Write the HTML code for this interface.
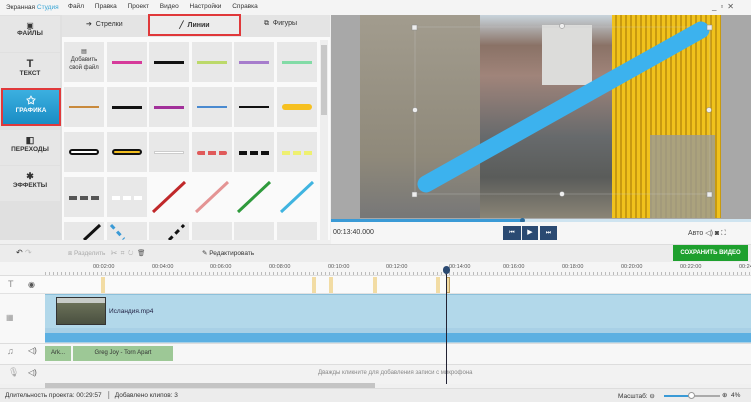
<!DOCTYPE html>
<html><head><meta charset="utf-8"><style>
*{box-sizing:border-box;margin:0;padding:0}
body{width:751px;height:402px;overflow:hidden;background:#f0f0f0;font-family:"Liberation Sans",sans-serif;font-size:7px;color:#333;position:relative}
.a{position:absolute}
.cell{position:absolute;width:40px;height:40px;background:#e8e8e8}
.ln{position:absolute;left:5px;width:30px;top:19px;height:3px}
.sb{position:absolute;left:0;width:60px;background:#e6e6e6;text-align:center;font-size:6.5px;font-weight:bold;color:#333}
.sb .ic{font-size:11px;font-weight:bold;display:block;margin-top:5px}
.tick{position:absolute;top:4px;font-size:5.5px;color:#555}
.clip{position:absolute;top:277px;width:4px;height:16px;background:#f2dca4}
</style></head><body>
<div class="a" style="left:0;top:0;width:751px;height:15px;background:#f4f4f4"></div>
<div class="a" style="left:6px;top:4px;font-size:6.5px">Экранная <span style="color:#3aa6d6">Студия</span></div>
<div class="a" style="left:68px;top:3px;font-size:6.5px;word-spacing:9px">Файл Правка Проект Видео Настройки Справка</div>
<div class="a" style="left:712px;top:2px;font-size:8px;color:#555;letter-spacing:4px">_▫✕</div>
<div class="a" style="left:0;top:15px;width:62px;height:225px;background:#e0e0e0"></div>
<div class="sb" style="top:16px;height:36px"><span class="ic" style="font-size:8px;font-weight:normal">▣</span>ФАЙЛЫ</div>
<div class="sb" style="top:53px;height:35px"><span class="ic">T</span>ТЕКСТ</div>
<div class="a" style="left:1px;top:88px;width:60px;height:38px;border:2px solid #e0383a;background:linear-gradient(#3cb0e0,#1a8cc4);color:#fff;text-align:center;font-size:6.5px;font-weight:bold"><span style="display:block;font-size:11px;margin-top:4px">✩</span>ГРАФИКА</div>
<div class="sb" style="top:130px;height:35px"><span class="ic" style="font-size:9px">◧</span>ПЕРЕХОДЫ</div>
<div class="sb" style="top:166px;height:35px"><span class="ic" style="font-size:9px">✱</span>ЭФФЕКТЫ</div>
<div class="a" style="left:62px;top:15px;width:268px;height:22px;background:#e4e4e4"></div>
<div class="a" style="left:86px;top:20px;font-size:7px">➔ &nbsp;Стрелки</div>
<div class="a" style="left:148px;top:14px;width:93px;height:22px;border:2px solid #e0383a;background:#ececec;text-align:center;font-size:7px;padding-top:5px;font-weight:bold">╱ &nbsp;Линии</div>
<div class="a" style="left:264px;top:20px;font-size:7px">⧉ &nbsp;Фигуры</div>
<div class="a" style="left:62px;top:37px;width:268px;height:203px;background:#fafafa"></div>
<div class="a" style="left:320px;top:40px;width:8px;height:200px;background:#eee"></div>
<div class="a" style="left:321px;top:45px;width:6px;height:70px;background:#c8c8c8"></div>
<div class="cell" style="left:64px;top:42px;text-align:center;font-size:6px;padding-top:6px;line-height:8px">▤<br>Добавить<br>свой файл</div>
<div class="cell" style="left:107px;top:42px"><div class="ln" style="background:#d63a9a"></div></div>
<div class="cell" style="left:149px;top:42px"><div class="ln" style="background:#111"></div></div>
<div class="cell" style="left:192px;top:42px"><div class="ln" style="background:#bcd96a"></div></div>
<div class="cell" style="left:234px;top:42px"><div class="ln" style="background:#a67ccc"></div></div>
<div class="cell" style="left:277px;top:42px"><div class="ln" style="background:#82dba6"></div></div>
<div class="cell" style="left:64px;top:87px"><div class="ln" style="background:#c98a3c;height:2px"></div></div>
<div class="cell" style="left:107px;top:87px"><div class="ln" style="background:#111"></div></div>
<div class="cell" style="left:149px;top:87px"><div class="ln" style="background:#a2309a"></div></div>
<div class="cell" style="left:192px;top:87px"><div class="ln" style="background:#4a8ad0;height:2px"></div></div>
<div class="cell" style="left:234px;top:87px"><div class="ln" style="background:#111;height:2px"></div></div>
<div class="cell" style="left:277px;top:87px"><div class="ln" style="background:#f6c020;height:6px;top:17px;border-radius:3px"></div></div>
<div class="cell" style="left:64px;top:132px"><div class="ln" style="background:#fff;border:2px solid #111;height:6px;top:17px;border-radius:3px"></div></div>
<div class="cell" style="left:107px;top:132px"><div class="ln" style="background:#f2be20;border:2px solid #111;height:6px;top:17px;border-radius:3px"></div></div>
<div class="cell" style="left:149px;top:132px"><div class="ln" style="background:#fff;border:1px solid #ccc;height:3px"></div></div>
<div class="cell" style="left:192px;top:132px"><div class="ln" style="background:repeating-linear-gradient(90deg,#e05a5a 0 8px,transparent 8px 11px);height:4px;border-radius:2px"></div></div>
<div class="cell" style="left:234px;top:132px"><div class="ln" style="background:repeating-linear-gradient(90deg,#111 0 8px,transparent 8px 11px);height:4px"></div></div>
<div class="cell" style="left:277px;top:132px"><div class="ln" style="background:repeating-linear-gradient(90deg,#eef070 0 8px,transparent 8px 11px);height:4px"></div></div>
<div class="cell" style="left:64px;top:177px"><div class="ln" style="background:repeating-linear-gradient(90deg,#555 0 8px,transparent 8px 11px);height:4px"></div></div>
<div class="cell" style="left:107px;top:177px"><div class="ln" style="background:repeating-linear-gradient(90deg,#fff 0 8px,transparent 8px 11px);height:4px"></div></div>
<svg class="a" style="left:149px;top:177px" width="170" height="63">
<line x1="4" y1="35" x2="36" y2="5" stroke="#c0282a" stroke-width="3"/>
<line x1="47" y1="35" x2="79" y2="5" stroke="#e49494" stroke-width="3"/>
<line x1="89" y1="35" x2="121" y2="5" stroke="#2e9a3c" stroke-width="3"/>
<line x1="132" y1="35" x2="164" y2="5" stroke="#40b4e0" stroke-width="3"/>
</svg>
<div class="cell" style="left:64px;top:222px;height:18px"></div>
<div class="cell" style="left:107px;top:222px;height:18px"></div>
<div class="cell" style="left:149px;top:222px;height:18px"></div>
<div class="cell" style="left:192px;top:222px;height:18px"></div>
<div class="cell" style="left:234px;top:222px;height:18px"></div>
<div class="cell" style="left:277px;top:222px;height:18px"></div>
<svg class="a" style="left:64px;top:222px" width="130" height="18">
<line x1="20" y1="18" x2="36" y2="3" stroke="#111" stroke-width="3"/>
<line x1="47" y1="3" x2="60" y2="17" stroke="#3a9ad6" stroke-width="3" stroke-dasharray="5 4"/>
<line x1="105" y1="18" x2="120" y2="3" stroke="#111" stroke-width="3" stroke-dasharray="5 4"/>
</svg>
<div class="a" style="left:331px;top:15px;width:420px;height:204px;background:#a8a8a8"></div>
<div class="a" style="left:360px;top:15px;width:120px;height:203px;background:linear-gradient(#a29c8e,#8f897a 70%,#777 100%)"></div>
<div class="a" style="left:480px;top:15px;width:135px;height:203px;background:linear-gradient(#c8d4dc 0%,#8a7266 15%,#a0847a 30%,#676a6c 60%,#5a5c5a 80%,#8a8476 100%)"></div>
<div class="a" style="left:542px;top:25px;width:50px;height:60px;background:#dcdcda"></div>
<div class="a" style="left:612px;top:15px;width:109px;height:203px;background:repeating-linear-gradient(90deg,#f0c21c 0 3px,#c89a10 3px 5px)"></div>
<div class="a" style="left:650px;top:135px;width:65px;height:83px;background:#9a9a96;opacity:.8"></div>
<svg class="a" style="left:331px;top:15px" width="420" height="205">
<rect x="84" y="12" width="295" height="167" fill="none" stroke="#ccc" stroke-width=".5" opacity=".6"/>
<line x1="95" y1="169" x2="370" y2="15" stroke="#3cb2ee" stroke-width="17" stroke-linecap="round"/>
<g fill="#eee" stroke="#888" stroke-width=".5"><rect x="81" y="10" width="5" height="5"/><rect x="376" y="10" width="5" height="5"/><rect x="81" y="177" width="5" height="5"/><rect x="376" y="177" width="5" height="5"/>
<circle cx="231" cy="11" r="2.5"/><circle cx="231" cy="179" r="2.5"/><circle cx="84" cy="95" r="2.5"/><circle cx="378" cy="95" r="2.5"/></g>
</svg>
<div class="a" style="left:331px;top:219px;width:420px;height:3px;background:#cfe4f0"></div>
<div class="a" style="left:331px;top:219px;width:192px;height:3px;background:#3a9ad6"></div>
<div class="a" style="left:520px;top:218px;width:5px;height:5px;border-radius:3px;background:#2a6a9a"></div>
<div class="a" style="left:331px;top:222px;width:420px;height:22px;background:#f6f6f6"></div>
<div class="a" style="left:333px;top:229px;font-size:7px">00:13:40.000</div>
<div class="a" style="left:503px;top:226px;width:18px;height:14px;background:#2b4a72;color:#fff;font-size:6px;text-align:center;line-height:14px">⏮</div>
<div class="a" style="left:522px;top:226px;width:16px;height:14px;background:#2b4a72;color:#fff;font-size:7px;text-align:center;line-height:14px">▶</div>
<div class="a" style="left:540px;top:226px;width:17px;height:14px;background:#2b4a72;color:#fff;font-size:6px;text-align:center;line-height:14px">⏭</div>
<div class="a" style="left:688px;top:229px;font-size:7px;color:#444">Авто ◁) ◙ ⛶</div>
<div class="a" style="left:0;top:244px;width:751px;height:18px;background:#ececec;border-top:1px solid #ddd"></div>
<div class="a" style="left:16px;top:248px;font-size:8px;color:#333">↶ <span style="color:#bbb">↷</span></div>
<div class="a" style="left:68px;top:249px;font-size:6.5px;color:#aaa">⧈ Разделить &nbsp; ✂ &nbsp;⌗ &nbsp;↻ &nbsp;<span style="color:#555">🗑</span></div>
<div class="a" style="left:202px;top:249px;font-size:6.5px;color:#333">✎ Редактировать</div>
<div class="a" style="left:673px;top:245px;width:75px;height:16px;background:#1ea02e;color:#fff;font-size:6px;font-weight:bold;text-align:center;line-height:16px">СОХРАНИТЬ ВИДЕО</div>
<div class="a" style="left:0;top:262px;width:751px;height:14px;background:#f5f5f5;border-bottom:1px solid #ddd"></div>
<div class="a" style="left:45px;top:272px;width:706px;height:3px;background:repeating-linear-gradient(90deg,#bbb 0 1px,transparent 1px 4px)"></div>
<div class="tick" style="left:93px;top:264px">00:02:00</div><div class="tick" style="left:152px;top:264px">00:04:00</div><div class="tick" style="left:210px;top:264px">00:06:00</div><div class="tick" style="left:269px;top:264px">00:08:00</div><div class="tick" style="left:328px;top:264px">00:10:00</div><div class="tick" style="left:386px;top:264px">00:12:00</div><div class="tick" style="left:449px;top:264px">00:14:00</div><div class="tick" style="left:503px;top:264px">00:16:00</div><div class="tick" style="left:562px;top:264px">00:18:00</div><div class="tick" style="left:621px;top:264px">00:20:00</div><div class="tick" style="left:680px;top:264px">00:22:00</div><div class="tick" style="left:739px;top:264px">00:24</div>
<div class="a" style="left:0;top:276px;width:751px;height:18px;background:#fafafa;border-bottom:1px solid #e2e2e2"></div>
<div class="a" style="left:8px;top:279px;font-size:9px;color:#888">T</div><div class="a" style="left:28px;top:280px;font-size:8px;color:#555">◉</div>
<div class="clip" style="left:101px"></div><div class="clip" style="left:312px"></div><div class="clip" style="left:329px"></div><div class="clip" style="left:373px"></div><div class="clip" style="left:436px"></div><div class="clip" style="left:446px;border:1px solid #c0a060"></div>
<div class="a" style="left:0;top:294px;width:45px;height:49px;background:#f8f8f8"></div>
<div class="a" style="left:6px;top:313px;font-size:8px;color:#999">▦</div>
<div class="a" style="left:45px;top:294px;width:706px;height:34px;background:#b2d8ea;border-top:1px solid #8cc0da"></div>
<div class="a" style="left:45px;top:328px;width:706px;height:15px;background:#a8d0e6"></div>
<div class="a" style="left:45px;top:333px;width:706px;height:9px;background:#5cb0e2"></div>
<div class="a" style="left:56px;top:297px;width:50px;height:28px;background:linear-gradient(#c8ccc8 0 20%,#6a7058 20%,#4a5040);border:1px solid #333"></div>
<div class="a" style="left:109px;top:308px;font-size:6.5px;color:#224">Исландия.mp4</div>
<div class="a" style="left:0;top:343px;width:751px;height:21px;background:#f7f7f7;border-top:1px solid #ddd"></div>
<div class="a" style="left:7px;top:346px;font-size:9px;color:#888">♫</div><div class="a" style="left:28px;top:346px;font-size:8px;color:#555">◁)</div>
<div class="a" style="left:45px;top:346px;width:26px;height:15px;background:#9dc896;font-size:6px;padding:4px 0 0 6px;color:#333">Ark...</div>
<div class="a" style="left:73px;top:346px;width:100px;height:15px;background:#9dc896;font-size:6px;text-align:center;padding-top:4px;color:#333">Greg Joy - Torn Apart</div>
<div class="a" style="left:0;top:364px;width:751px;height:20px;background:#f2f2f2;border-top:1px solid #ddd"></div>
<div class="a" style="left:8px;top:367px;font-size:9px;color:#aaa">🎙</div><div class="a" style="left:28px;top:368px;font-size:8px;color:#555">◁)</div>
<div class="a" style="left:318px;top:370px;font-size:6px;color:#888">Дважды кликните для добавления записи с микрофона</div>
<div class="a" style="left:45px;top:383px;width:330px;height:5px;background:#c4c4c4"></div>
<div class="a" style="left:446px;top:270px;width:1px;height:114px;background:#223"></div>
<div class="a" style="left:443px;top:266px;width:7px;height:8px;border-radius:4px;background:#2b4a72"></div>
<div class="a" style="left:0;top:388px;width:751px;height:14px;background:#ececec;border-top:1px solid #ddd"></div>
<div class="a" style="left:5px;top:392px;font-size:6.5px">Длительность проекта: 00:29:57 &nbsp;&nbsp;│&nbsp; Добавлено клипов: 3</div>
<div class="a" style="left:618px;top:392px;font-size:6.5px">Масштаб: ⊖</div>
<div class="a" style="left:664px;top:395px;width:28px;height:2px;background:#3a9ad6"></div>
<div class="a" style="left:692px;top:395px;width:28px;height:2px;background:#aaa"></div>
<div class="a" style="left:688px;top:392px;width:7px;height:7px;border-radius:4px;background:#fff;border:1px solid #999"></div>
<div class="a" style="left:722px;top:391px;font-size:6.5px">⊕ &nbsp;4%</div>
</body></html>
